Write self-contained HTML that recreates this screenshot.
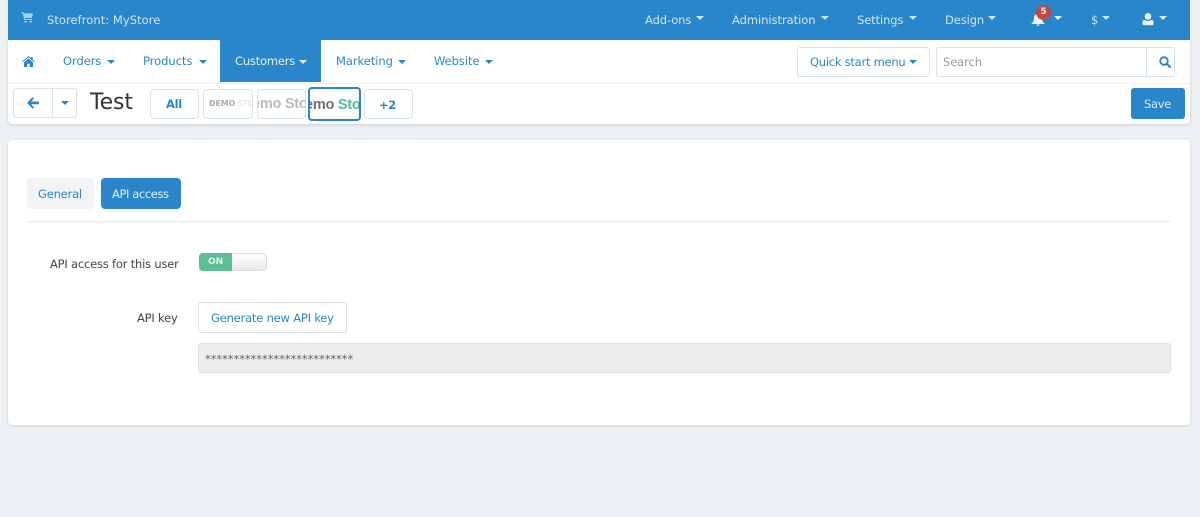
<!DOCTYPE html>
<html><head><meta charset="utf-8"><title>Test</title>
<style>
html,body{margin:0;padding:0}
body{width:1200px;height:517px;background:#edf0f3;position:relative;overflow:hidden;font-family:"DejaVu Sans","Liberation Sans",sans-serif;font-size:11.5px;color:#444}
#p{position:absolute;left:0;top:0;width:1200px;height:517px;filter:blur(.3px)}
.a{position:absolute;white-space:nowrap}
.t{position:absolute;white-space:nowrap;line-height:16px}
.w{color:#cfe4f5}
.b{color:#2a86ca}
.car{position:absolute;width:0;height:0;border-left:4px solid transparent;border-right:4px solid transparent;border-top:4px solid currentColor}
.box{position:absolute;box-sizing:border-box;background:#fff;border:1px solid #d8e2ec;border-radius:3px}
svg{position:absolute}
</style></head><body><div id="p">
<div class="a" style="left:8px;top:0;width:1182px;height:40px;background:#2a86ca"></div>
<div class="a" style="left:8px;top:40px;width:1182px;height:84px;background:#fff;border-radius:0 0 4px 4px;box-shadow:0 1px 3px rgba(0,0,0,.14)"></div>
<div class="a" style="left:8px;top:83px;width:1182px;height:1px;background:#eef1f4"></div>

<svg style="left:21px;top:12px" width="13" height="11" viewBox="0 0 14 12"><path fill="#a9d0ee" d="M0 0h2.500l.4 1.500H13l-1.200 5H4.200l.3 1.300h7.300v1H3.600L1.700 1H0zM4.600 9.500a1.200 1.200 0 1 1 0 2.400 1.200 1.200 0 0 1 0-2.400zM10.600 9.500a1.200 1.200 0 1 1 0 2.400 1.200 1.200 0 0 1 0-2.400z"/></svg>
<div class="t w" style="left:47px;top:12px;letter-spacing:.05px">Storefront: MyStore</div>

<div class="t w" style="left:645px;top:12px;letter-spacing:-.1px">Add-ons</div><div class="car w" style="left:696px;top:16px"></div>
<div class="t w" style="left:732px;top:12px;letter-spacing:-.05px">Administration</div><div class="car w" style="left:821px;top:16px"></div>
<div class="t w" style="left:857px;top:12px;letter-spacing:-.1px">Settings</div><div class="car w" style="left:909px;top:16px"></div>
<div class="t w" style="left:945px;top:12px;letter-spacing:-.1px">Design</div><div class="car w" style="left:988px;top:16px"></div>
<svg style="left:1031px;top:13px" width="14" height="13" viewBox="0 0 14 13"><path fill="#eaf3fb" d="M7 0c.6 0 1 .4 1 1 2 .4 3 2 3 4 0 3 1 4 2.500 5.500V11H.5v-.5C2 9 3 8 3 5c0-2 1-3.600 3-4 0-.6.4-1 1-1zM5.500 11.500h3C8.300 12.500 7.700 13 7 13s-1.300-.5-1.500-1.500z"/></svg>
<div class="a" style="left:1036px;top:5px;width:15px;height:15px;border-radius:50%;background:#c24641;color:#fbe9e8;font-size:9px;font-weight:bold;line-height:14px;text-align:center">5</div>
<div class="car" style="left:1054px;top:16px;color:#eaf3fb"></div>
<div class="t w" style="left:1091px;top:12px">$</div><div class="car w" style="left:1102px;top:16px"></div>
<svg style="left:1142px;top:13px" width="12" height="13" viewBox="0 0 12 13"><path fill="#eaf3fb" d="M6 0a3.200 3.200 0 0 1 3.200 3.400A3.200 3.200 0 0 1 6 6.800a3.200 3.200 0 0 1-3.200-3.400A3.200 3.200 0 0 1 6 0zM2.500 6.800C3.500 7.600 4.600 8 6 8s2.500-.4 3.500-1.200c1.500.2 2.100 1.500 2.100 3.500 0 1.300-.7 2-1.800 2H2.200c-1.100 0-1.800-.7-1.800-2 0-2 .6-3.300 2.100-3.500z"/></svg>
<div class="car" style="left:1159px;top:16px;color:#eaf3fb"></div>

<svg style="left:22px;top:56px" width="13" height="11" viewBox="0 0 13 11"><path fill="#2a86ca" d="M6.500 0L9 2.100V1h1.700v2.600L13 5.600l-.6.700-5.900-4.900L.6 6.300 0 5.600zM6.500 2.500L11 6.200V11H7.800V7.800H5.200V11H2V6.200z"/></svg>
<div class="t b" style="left:63px;top:53px;letter-spacing:-.05px">Orders</div><div class="car b" style="left:107px;top:60px"></div>
<div class="t b" style="left:143px;top:53px;letter-spacing:-.05px">Products</div><div class="car b" style="left:199px;top:60px"></div>
<div class="a" style="left:220px;top:40px;width:101px;height:42px;background:#2a86ca"></div>
<div class="t w" style="left:235px;top:53px;letter-spacing:-.2px;color:#e2effa">Customers</div><div class="car" style="left:299px;top:60px;color:#e2effa"></div>
<div class="t b" style="left:336px;top:53px;letter-spacing:-.05px">Marketing</div><div class="car b" style="left:398px;top:60px"></div>
<div class="t b" style="left:434px;top:53px;letter-spacing:-.05px">Website</div><div class="car b" style="left:485px;top:60px"></div>

<div class="box" style="left:797px;top:47px;width:133px;height:30px"></div>
<div class="t b" style="left:810px;top:54px;letter-spacing:-.25px">Quick start menu</div><div class="car b" style="left:909px;top:60px"></div>
<div class="box" style="left:936px;top:47px;width:239px;height:30px"></div>
<div class="a" style="left:1146px;top:48px;width:1px;height:28px;background:#d8e2ec"></div>
<div class="t" style="left:943px;top:54px;color:#9a9a9a;letter-spacing:-.1px">Search</div>
<svg style="left:1159px;top:56px" width="12" height="12" viewBox="0 0 12 12"><circle cx="5" cy="5" r="3.800" fill="none" stroke="#2a86ca" stroke-width="1.800"/><path d="M7.800 7.800L11 11" stroke="#2a86ca" stroke-width="2.200" stroke-linecap="round"/></svg>

<div class="box" style="left:13px;top:88px;width:64px;height:30px"></div>
<div class="a" style="left:52px;top:89px;width:1px;height:28px;background:#d8e2ec"></div>
<svg style="left:27px;top:97px" width="12" height="12" viewBox="0 0 12 12"><path fill="#2a86ca" d="M5.700 0l1.300 1.300L4.200 4.500H12v2.800H4.200L7 10.500 5.700 11.800 0 5.900z"/></svg>
<div class="car b" style="left:61px;top:101px"></div>
<div class="t" style="left:90px;top:91px;font-size:22px;line-height:24px;color:#333;letter-spacing:-.1px">Test</div>

<div class="box" style="left:150px;top:89px;width:49px;height:30px;border-radius:4px"></div>
<div class="t" style="left:166px;top:96px;color:#2a86ca;font-weight:bold;font-size:11.5px;letter-spacing:-.3px">All</div>
<div class="box" style="left:203px;top:89px;width:50px;height:30px;border-radius:4px;overflow:hidden"><div class="t" style="left:5px;top:6px;font-size:8px;font-weight:bold;color:#aaa;letter-spacing:-.2px">DEMO <span style="font-weight:normal;color:#d8d8d8">STORE</span></div></div>
<div class="box" style="left:257px;top:89px;width:49px;height:30px;border-radius:4px;overflow:hidden"><div class="t" style="left:-6px;top:6px;font-family:'Liberation Sans',sans-serif;font-size:14.5px;font-weight:bold;color:#bbb;letter-spacing:-.25px">emo Sto</div></div>
<div class="box" style="left:308px;top:87px;width:53px;height:34px;border:2px solid #2a86ca;border-radius:4px;overflow:hidden"><div class="t" style="left:-5px;top:8px;font-family:'Liberation Sans',sans-serif;font-size:14.5px;font-weight:bold;color:#6b7276;letter-spacing:-.25px">emo <span style="color:#4cbf97">Sto</span></div></div>
<div class="box" style="left:364px;top:89px;width:49px;height:30px;border-radius:4px"></div>
<div class="t" style="left:379px;top:97px;color:#2a86ca;font-weight:bold;font-size:11.5px;letter-spacing:-.5px">+2</div>

<div class="a" style="left:1131px;top:88px;width:54px;height:31px;background:#2a86ca;border-radius:3px"></div>
<div class="t" style="left:1144px;top:96px;color:#d6e8f7;letter-spacing:-.3px;font-size:11.5px">Save</div>

<div class="a" style="left:8px;top:140px;width:1182px;height:285px;background:#fff;border-radius:4px;box-shadow:0 1px 3px rgba(0,0,0,.12)"></div>
<div class="a" style="left:27px;top:178px;width:67px;height:31px;background:#f2f3f4;border-radius:4px"></div>
<div class="t b" style="left:38px;top:186px;letter-spacing:-.2px">General</div>
<div class="a" style="left:101px;top:178px;width:80px;height:31px;background:#2a86ca;border-radius:4px"></div>
<div class="t" style="left:112px;top:186px;color:#e2effa;letter-spacing:-.4px">API access</div>
<div class="a" style="left:27px;top:221px;width:1144px;height:1px;background:#e6ebf0"></div>

<div class="t" style="left:50px;top:256px;color:#444;letter-spacing:-.2px">API access for this user</div>
<div class="a" style="left:199px;top:253px;width:68px;height:18px;box-sizing:border-box;border:1px solid #ddd;border-radius:4px;background:linear-gradient(#fff,#e9e9e9);overflow:hidden"></div>
<div class="a" style="left:199px;top:253px;width:33px;height:18px;background:#5dbd94;border-radius:4px 0 0 4px"></div>
<div class="a" style="left:208px;top:256px;color:#e3f5ed;font-size:9px;font-weight:bold;line-height:12px">ON</div>

<div class="t" style="left:137px;top:310px;color:#444;letter-spacing:-.2px">API key</div>
<div class="box" style="left:198px;top:302px;width:149px;height:31px"></div>
<div class="t b" style="left:211px;top:310px;letter-spacing:-.2px">Generate new API key</div>
<div class="a" style="left:198px;top:343px;width:973px;height:30px;box-sizing:border-box;background:#eee;border:1px solid #d8e2ec;border-radius:3px"></div>
<div class="t" style="left:205px;top:351px;color:#666;font-size:11.5px;letter-spacing:-.05px">**************************</div>
</div></body></html>
